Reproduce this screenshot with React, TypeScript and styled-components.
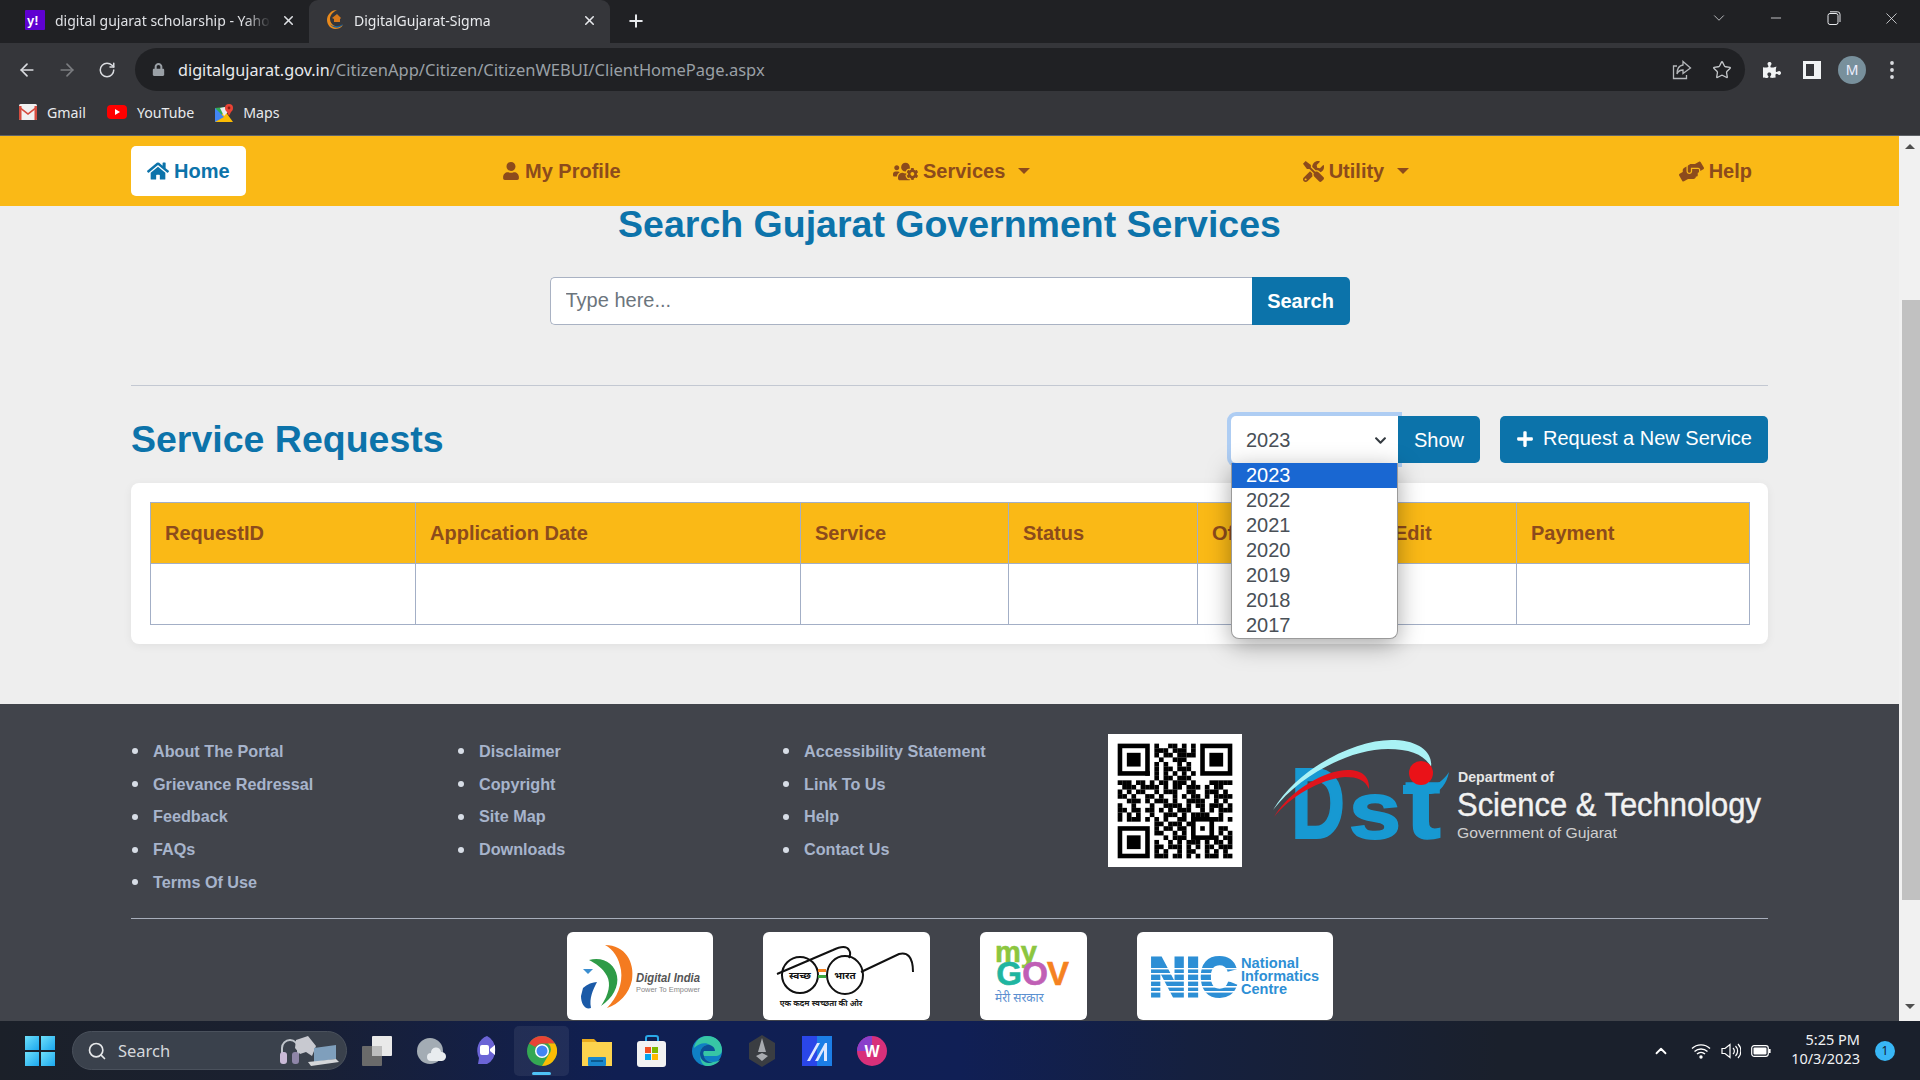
import React from "react";
import styled, { createGlobalStyle } from "styled-components";
import {
  FaHome, FaUser, FaUsersCog, FaTools, FaHandsHelping, FaPlus, FaPuzzlePiece, FaLock, FaChevronDown,
} from "react-icons/fa";
import { ArrowLeft, ArrowRight, RotateCw, Star, X, Plus, ChevronDown, Minus, Search as SearchGlyph, ChevronUp } from "lucide-react";

const BLUE = "#0c73aa";
const BROWN = "#8c4b1c";
const YELLOW = "#fab916";
const SANS = `"Liberation Sans", Arial, sans-serif`;
const UI = `"Noto Sans", "Open Sans", sans-serif`;
const HINDI = `"Noto Sans Devanagari", "Noto Sans", "DejaVu Sans", sans-serif`;

const Global = createGlobalStyle`
  html, body { margin: 0; padding: 0; height: 100%; overflow: hidden; background: #eee; }
  * { box-sizing: border-box; }
  #root { height: 100%; }
`;

const Screen = styled.div`
  display: flex; flex-direction: column; width: 1920px; height: 1080px; overflow: hidden;
  font-family: ${SANS};
`;

/* ---------- browser chrome ---------- */
const TabStrip = styled.div`
  display: flex; align-items: flex-end; height: 43px; padding-left: 8px; background: #202124; flex-shrink: 0;
`;
const Tab = styled.div<{ $active?: boolean }>`
  display: flex; align-items: center; gap: 10px; width: 301px; height: 43px; padding: 0 13px 3px 17px;
  border-radius: 9px 9px 0 0; color: ${(p) => (p.$active ? "#e8eaed" : "#dfe1e5")};
  background: ${(p) => (p.$active ? "#35363a" : "transparent")};
  font: 14px ${UI};
`;
const TabTitle = styled.span`
  flex: 1; white-space: nowrap; overflow: hidden;
  mask-image: linear-gradient(90deg, #000 88%, transparent 100%);
`;
const NewTab = styled.div`
  display: flex; margin: 0 0 8px 16px; color: #e8eaed; height: 28px; align-items: center;
`;
const WindowControls = styled.div`
  display: flex; align-items: center; margin-left: auto; align-self: flex-start; height: 36px; color: #e8eaed;
`;
const WinBtn = styled.div`
  display: flex; align-items: center; justify-content: center; width: 57.5px;
`;
const Toolbar = styled.div`
  display: flex; align-items: flex-start; height: 48px; padding: 5px 0 0 7px; background: #35363a; flex-shrink: 0;
`;
const ToolBtn = styled.div<{ $dim?: boolean }>`
  display: flex; align-items: center; justify-content: center; width: 40px; height: 43px; flex-shrink: 0;
  color: ${(p) => (p.$dim ? "#7b7d80" : "#dadce0")};
`;
const Address = styled.div`
  display: flex; align-items: center; width: 1610px; height: 43px; margin: 0 7px 0 8px; padding: 0 3px 0 17px;
  border-radius: 22px; background: #202124; font: 16.2px ${UI};
`;
const LockIcon = styled.span`
  display: flex; color: #9aa0a6; width: 26px; font-size: 13px;
`;
const Host = styled.span` color: #e8eaed; `;
const UrlPath = styled.span` color: #9aa0a6; flex: 1; font-size: 16.5px; `;
const Avatar = styled.div`
  display: flex; align-items: center; justify-content: center; width: 28px; height: 28px; border-radius: 50%;
  background: #78909c; color: #eef; font: 14px ${UI};
`;
const Bookmarks = styled.div`
  display: flex; align-items: center; height: 45px; padding: 0 0 2px 19px; background: #35363a;
  border-bottom: 1px solid #5f6368; flex-shrink: 0; color: #e8eaed; font: 14.2px ${UI};
`;
const Bookmark = styled.div`
  display: flex; align-items: center; gap: 10px; margin-right: 21px;
`;

/* ---------- page ---------- */
const Viewport = styled.div` display: flex; flex: 1; min-height: 0; `;
const Page = styled.main`
  flex: 1; min-width: 0; background: #eeeeee; overflow: hidden; display: flex; flex-direction: column;
`;
const Bar = styled.aside`
  display: flex; flex-direction: column; align-items: center; width: 21px; background: #f1f1f1; flex-shrink: 0;
`;
const ArrowUp = styled.i`
  margin-top: 8px; border: 5px solid transparent; border-top: 0; border-bottom: 5px solid #505050;
`;
const Thumb = styled.div`
  width: 18px; height: 600px; margin-top: 151px; margin-left: 3px; background: #c1c1c1;
`;
const ArrowDown = styled.i`
  margin-top: 104px; border: 5px solid transparent; border-bottom: 0; border-top: 5px solid #505050;
`;

const Nav = styled.nav`
  display: flex; justify-content: space-between; align-items: flex-start; height: 70px; padding: 10px 131px 0 131px;
  background: ${YELLOW}; flex-shrink: 0;
`;
const NavItem = styled.a<{ $active?: boolean; $wide?: boolean }>`
  display: flex; align-items: center; gap: 5px; height: 50px; padding: 0 16px 0 ${(p) => (p.$wide ? 19 : 16)}px; border-radius: 5px;
  font: bold 20px ${SANS}; color: ${(p) => (p.$active ? BLUE : BROWN)};
  background: ${(p) => (p.$active ? "#fff" : "transparent")};
`;
const Caret = styled.i`
  margin-left: 8px; border-top: 6px solid ${BROWN}; border-left: 6px solid transparent; border-right: 6px solid transparent;
`;
const Content = styled.div` padding: 0 131px; flex-shrink: 0; `;
const Title = styled.h1`
  margin: 0; text-align: center; font: bold 37.5px/37px ${SANS}; color: ${BLUE};
`;
const SearchRow = styled.div`
  display: flex; width: 800px; height: 48px; margin: 34px auto 0;
`;
const SearchInput = styled.input`
  flex: 1; min-width: 0; padding: 0 15px 2px; border: 1px solid #a9b2c3; border-right: 0; border-radius: 5px 0 0 5px;
  background: #fff; font: 20px ${SANS}; color: #495057;
  &::placeholder { color: #6c757d; opacity: 1; }
`;
const SearchBtn = styled.button`
  width: 98px; border: 0; border-radius: 0 5px 5px 0; background: ${BLUE}; color: #fff; font: bold 20px ${SANS};
`;
const Rule = styled.hr`
  margin: 60px 0 0; border: 0; border-top: 1px solid #c3c8d2; height: 1px;
`;
const SectionRow = styled.div`
  display: flex; align-items: center; height: 47px; margin-top: 30px;
`;
const SectionTitle = styled.h2`
  margin: 0; flex: 1; font: bold 37.5px/47px ${SANS}; color: ${BLUE};
`;
const SelectWrap = styled.div` position: relative; width: 167px; height: 47px; `;
const SelectBox = styled.div`
  display: flex; align-items: center; justify-content: space-between; height: 47px; padding: 1px 11px 0 15px;
  background: #fff; border-radius: 5px 0 0 5px; box-shadow: 0 0 0 4px #aecdf3; font: 20px ${SANS}; color: #495057;
`;
const Dropdown = styled.ul`
  position: absolute; z-index: 3; left: 0; top: 100%; width: 167px; margin: 0; padding: 0; list-style: none;
  background: #fff; border: 1px solid #9a9a9a; border-top: 0; border-radius: 0 0 8px 8px; overflow: hidden;
  box-shadow: 0 6px 24px rgba(0, 0, 0, 0.35);
`;
const Option = styled.li<{ $selected?: boolean }>`
  height: 25px; padding-left: 14px; font: 20px/25px ${SANS};
  color: ${(p) => (p.$selected ? "#fff" : "#495057")};
  background: ${(p) => (p.$selected ? "#1967d2" : "transparent")};
`;
const ShowBtn = styled.button`
  position: relative; width: 82px; height: 47px; padding-top: 2px; border: 0; border-radius: 0 5px 5px 0; background: ${BLUE}; color: #fff;
  font: 20px ${SANS};
`;
const RequestBtn = styled.button`
  display: flex; align-items: center; gap: 9px; width: 268px; height: 47px; margin-left: 20px; padding: 0 0 2px 16px; border: 0;
  border-radius: 5px; background: ${BLUE}; color: #fff; font: 20px ${SANS};
`;
const Card = styled.section`
  margin-top: 20px; padding: 19px 19px 19px 19px; background: #fff; border-radius: 8px; box-shadow: 0 2px 10px rgba(0, 0, 0, 0.06);
`;
const Table = styled.table`
  width: 1599px; table-layout: fixed; border-collapse: collapse; font-family: ${SANS};
`;
const Th = styled.th`
  height: 61px; padding: 0 14px; text-align: left; background: ${YELLOW}; border: 1px solid #a3afc6;
  font: bold 20px ${SANS}; color: ${BROWN};
`;
const Td = styled.td` height: 61px; border: 1px solid #a3afc6; background: #fff; `;

const Footer = styled.footer`
  flex: 1; margin-top: 60px; padding: 30px 131px 0; background: #41444b;
`;
const FooterTop = styled.div`
  display: grid; grid-template-columns: 326px 325px 326px 134px 1fr; height: 164px;
`;
const LinkList = styled.ul` margin: 0; padding: 1px 0 0; list-style: none; `;
const LinkItem = styled.li`
  display: flex; align-items: center; gap: 15px; height: 32.75px; padding-left: 1px;
  font: bold 16.2px ${SANS}; color: #a7b4cb;
`;
const Dot = styled.i` width: 6px; height: 6px; border-radius: 50%; background: #d7dde6; flex-shrink: 0; `;
const QrBox = styled.div` width: 134px; height: 133px; background: #fff; display: flex; `;
const DstSvg = styled.svg` display: block; margin: 1px 0 0 28px; `;
const FooterRule = styled.hr`
  margin: 20px 0 0; border: 0; border-top: 1px solid #a7aebb; height: 1px;
`;
const Partners = styled.div`
  display: flex; justify-content: center; gap: 50px; margin-top: 13px;
`;
const PartnerCard = styled.div<{ $w: number }>`
  width: ${(p) => p.$w}px; height: 88px; background: #fff; border-radius: 6px; overflow: hidden;
`;

/* ---------- taskbar ---------- */
const Taskbar = styled.footer`
  display: flex; align-items: center; height: 59px; flex-shrink: 0; padding-right: 25px; color: #fff;
  background: linear-gradient(90deg, #1b2029 0%, #1a2030 14%, #101f52 32%, #101f55 50%, #15203f 62%, #1a202c 78%, #1a202c 100%);
  font-family: ${UI};
`;
const StartBtn = styled.div`
  display: grid; grid-template-columns: 14px 14px; gap: 2px; margin: 0 17px 0 25px;
`;
const Pane = styled.i` width: 14px; height: 14px; background: linear-gradient(135deg, #6ee0fb, #1ba7ee); `;
const SearchPill = styled.div`
  display: flex; align-items: center; gap: 11px; width: 275px; height: 39px; padding-left: 14px; border-radius: 20px;
  background: #3a414c; border: 1px solid #4a515c; color: #d5d8dc; font-size: 16.5px;
`;
const Deco = styled.svg` margin-left: auto; margin-right: 6px; `;
const Slots = styled.div` display: flex; margin-left: 2px; `;
const Slot = styled.div<{ $on?: boolean }>`
  position: relative; display: flex; align-items: center; justify-content: center; width: 55px; height: 50px; border-radius: 5px;
  background: ${(p) => (p.$on ? "rgba(255,255,255,.07)" : "transparent")};
`;
const Running = styled.i`
  position: absolute; left: 18px; bottom: 1px; width: 19px; height: 3px; border-radius: 2px; background: #4fc3f7;
`;
const Tray = styled.div`
  display: flex; align-items: center; gap: 10px; margin-left: auto;
`;
const TrayChevron = styled.span` display: flex; margin-right: 11px; `;
const Clock = styled.div`
  margin-left: 10px; padding-bottom: 3px; text-align: right; font-size: 14.5px; line-height: 19px; color: #f0f2f4;
`;
const Badge = styled.div`
  display: flex; align-items: center; justify-content: center; width: 20px; height: 20px; margin-left: 5px; border-radius: 50%;
  background: #38b6f5; color: #10202c; font-size: 12px;
`;

/* ---------- drawings ---------- */
const Yahoo = () => (
  <svg width="20" height="20" viewBox="0 0 20 20">
    <rect width="20" height="20" rx="1" fill="#5f01d1" />
    <text x="2" y="15" fontFamily={SANS} fontWeight="bold" fontSize="13" fill="#fff">y!</text>
  </svg>
);
const Sigma = () => (
  <svg width="18" height="20" viewBox="0 0 18 20">
    <path d="M11 0C5 0 1 5 1 10c0 5 4 9 8 9 3 0 6-1 8-4-3 2-6 2-8 1-3-1-5-4-5-7 0-4 3-7 7-9z" fill="#e98a1c" />
    <path d="M6 8l5-4 4 4-1 1v3H8V9z" fill="#d9791a" />
    <path d="M4 14c3 3 8 3 13 0-3 5-10 5-13 0z" fill="#17609c" />
  </svg>
);
const Gmail = () => (
  <svg width="18" height="16" viewBox="0 0 18 16">
    <rect width="18" height="16" rx="1.5" fill="#f1f1f1" />
    <path d="M0 2l9 7 9-7v2L9 11 0 4z" fill="#d54c3f" />
    <path d="M0 2h2.5v14H1a1 1 0 0 1-1-1zM18 2h-2.5v14H17a1 1 0 0 0 1-1z" fill="#d54c3f" />
  </svg>
);
const Youtube = () => (
  <svg width="20" height="14" viewBox="0 0 20 14">
    <rect width="20" height="14" rx="4" fill="#f00" />
    <path d="M8 4l5 3-5 3z" fill="#fff" />
  </svg>
);
const Maps = () => (
  <svg width="18" height="19" viewBox="0 0 18 19">
    <path d="M0 5l10-1v15H0z" fill="#34a853" />
    <path d="M0 19L10 8l8 11z" fill="#fbbc04" />
    <path d="M0 5l9 9-9 5z" fill="#4285f4" />
    <path d="M5 5l5-1 3 5-4 4z" fill="#e8eaed" />
    <circle cx="14" cy="5" r="4" fill="#ea4335" />
    <path d="M11 7l3 6 3-6z" fill="#ea4335" />
    <circle cx="14" cy="5" r="1.4" fill="#8c1c13" />
  </svg>
);
const Share = () => (
  <svg width="20" height="20" viewBox="0 0 20 20" fill="none" stroke="#b5b8bb" strokeWidth="1.3">
    <path d="M5 6H1.5v12.5h13V15" />
    <path d="M11 1.5L18.5 8 11 13.5V10c-3 0-5 1-6 4 0-5 2-8.5 6-9z" />
  </svg>
);
const SidePanel = () => (
  <svg width="18" height="18" viewBox="0 0 18 18">
    <rect width="18" height="18" fill="#f1f3f4" />
    <rect x="3" y="3" width="8" height="12" fill="#35363a" />
  </svg>
);
const Dots = () => (
  <svg width="4" height="18" viewBox="0 0 4 18" fill="#dadce0">
    <circle cx="2" cy="2" r="1.9" /><circle cx="2" cy="9" r="1.9" /><circle cx="2" cy="16" r="1.9" />
  </svg>
);
const Restore = () => (
  <svg width="14" height="14" viewBox="0 0 14 14" fill="none" stroke="#e8eaed" strokeWidth="1">
    <rect x="1" y="2.5" width="10" height="11" rx="2" />
    <path d="M3 .8h7.5A2.5 2.5 0 0 1 13 3.3V11" />
  </svg>
);

const QR_ROWS = [
  "........#..##.#.#........", "........###.###.#........", "........#.##.####........", ".........#..###..........",
  "........#.#..#.#.........", "........#.##.###.........", "......#.#.#.#.#.#........", "........#.##.###.........",
  "###.##.#.##.###.#...#####", ".###.####.#.##.###.#.##..", "#.#.##..#.###..##..###.#.", "##.#..##.#..#.#.##.#.####",
  "..###.#.###.#..####..#.#.", "#..#...#..####.#.##.###.#", "##.##.##.#.#.###..#.#.###", "#.#.#..#..###.#.####..#..",
  "#.###.#.#.#..##.#.#####.#", "........##.###.#..#.#....", "........#.##.##.#.###.##.", "........##..#.#.#####.#.#",
  "..........#.###..#...#.##", "........#..#.#.###.#.##.#", "........##.###.#.#.##.###", "........#.#..#.##..#.#.#.", "........###.##.#.#.###.##",
];
const Finder = ({ x, y }: { x: number; y: number }) => (
  <g>
    <rect x={x} y={y} width="7" height="7" fill="#000" />
    <rect x={x + 1} y={y + 1} width="5" height="5" fill="#fff" />
    <rect x={x + 2} y={y + 2} width="3" height="3" fill="#000" />
  </g>
);
const QrCode = () => (
  <svg width="134" height="133" viewBox="-2.1 -2.1 29.2 29">
    {QR_ROWS.map((row, y) =>
      row.split("").map((c, x) => (c === "#" ? <rect key={`${x}-${y}`} x={x} y={y} width="1.02" height="1.02" fill="#000" /> : null)),
    )}
    <Finder x={0} y={0} />
    <Finder x={18} y={0} />
    <Finder x={0} y={18} />
    <rect x="16" y="16" width="5" height="5" fill="#000" />
    <rect x="17" y="17" width="3" height="3" fill="#fff" />
    <rect x="18" y="18" width="1" height="1" fill="#000" />
  </svg>
);

const DstLogo = () => (
  <DstSvg width="497" height="112" viewBox="0 0 497 112">
    <text x="21" y="103" fontFamily={SANS} fontWeight="bold" fontSize="100" fill="#1799d2" stroke="#1799d2" strokeWidth="2" textLength="54" lengthAdjust="spacingAndGlyphs">D</text>
    <text x="79" y="103" fontFamily={SANS} fontWeight="bold" fontSize="80" fill="#1799d2" stroke="#1799d2" strokeWidth="2" textLength="52" lengthAdjust="spacingAndGlyphs">s</text>
    <text x="135" y="103" fontFamily={SANS} fontWeight="bold" fontSize="104" fill="#1799d2" stroke="#1799d2" strokeWidth="1.500" textLength="36" lengthAdjust="spacingAndGlyphs">t</text>
    <path d="M133 50h26c8 0 14-4 20-13-2 11-9 21-18 22h-28z" fill="#1799d2" />
    <path d="M3 75C30 30 90 3 125 5c25 1 38 13 36 27-6-12-21-18-43-18C80 14 30 40 3 75z" fill="#a9f2f5" />
    <path d="M4 82C20 55 55 35 78 35c14 0 22 7 21 19-4-9-11-12-24-12C50 44 20 62 4 82z" fill="#e0141c" />
    <circle cx="151" cy="38" r="12" fill="#ea1218" />
    <text x="188" y="47" fontFamily={SANS} fontWeight="bold" fontSize="14" fill="#e6e6e6" textLength="96" lengthAdjust="spacingAndGlyphs">Department of</text>
    <text x="187" y="81" fontFamily={SANS} fontSize="34" fill="#f2f2f2" stroke="#f2f2f2" strokeWidth=".4" textLength="304" lengthAdjust="spacingAndGlyphs">Science &amp; Technology</text>
    <text x="187" y="103" fontFamily={SANS} fontSize="15" fill="#cfcfcf" textLength="160" lengthAdjust="spacingAndGlyphs">Government of Gujarat</text>
  </DstSvg>
);

const DigitalIndia = () => (
  <svg width="146" height="88" viewBox="0 0 146 88">
    <path d="M38 13C58 13 68 30 65 48 62 62 52 72 40 76c10-10 16-24 14-38-2-12-8-21-16-25z" fill="#f47b20" />
    <path d="M22 28c14-4 26 4 28 16 2 10-4 22-16 30 8-12 10-22 6-30-4-8-12-13-18-16z" fill="#2e9b47" />
    <path d="M16 56c4-4 10-6 14-6-4 8-8 16-6 26-6 2-10-4-10-12z" fill="#1b5aa7" />
    <path d="M16 37h10l-5 5z" fill="#3b8ed0" />
    <text x="69" y="50" fontFamily={SANS} fontWeight="bold" fontStyle="italic" fontSize="12" fill="#555" textLength="64" lengthAdjust="spacingAndGlyphs">Digital India</text>
    <text x="69" y="60" fontFamily={SANS} fontSize="8" fill="#888" textLength="64" lengthAdjust="spacingAndGlyphs">Power To Empower</text>
  </svg>
);
const Swachh = () => (
  <svg width="167" height="88" viewBox="0 0 167 88">
    <g fill="none" stroke="#111" strokeWidth="2">
      <ellipse cx="37" cy="43" rx="18" ry="18" />
      <ellipse cx="82" cy="43" rx="18" ry="19" />
      <path d="M14 42L70 18c8-4 14-4 16 0 2 3 1 6 0 8" />
      <path d="M98 40l38-18c8-2 14 2 14 18" />
    </g>
    <rect x="55" y="37" width="8" height="3" fill="#f58220" />
    <rect x="55" y="43" width="8" height="3" fill="#3aa53f" />
    <text x="37" y="47" textAnchor="middle" fontFamily={HINDI} fontWeight="bold" fontSize="10" fill="#111">स्वच्छ</text>
    <text x="82" y="47" textAnchor="middle" fontFamily={HINDI} fontWeight="bold" fontSize="10" fill="#111">भारत</text>
    <text x="58" y="74" textAnchor="middle" fontFamily={HINDI} fontSize="8" fontWeight="bold" fill="#222">एक कदम स्वच्छता की ओर</text>
  </svg>
);
const MyGov = () => (
  <svg width="107" height="88" viewBox="0 0 107 88">
    <text x="15" y="30" fontFamily={SANS} fontWeight="bold" fontSize="30" fill="#8cc63f" stroke="#8cc63f" strokeWidth=".6" textLength="42" lengthAdjust="spacingAndGlyphs">my</text>
    <text x="29" y="53" fontFamily={SANS} fontWeight="bold" fontSize="33" fill="#1fb5a0" stroke="#1fb5a0" strokeWidth=".6" textAnchor="middle">G</text>
    <text x="55" y="53" fontFamily={SANS} fontWeight="bold" fontSize="33" fill="#c05fb5" stroke="#c05fb5" strokeWidth=".6" textAnchor="middle">O</text>
    <text x="78" y="53" fontFamily={SANS} fontWeight="bold" fontSize="33" fill="#f58220" stroke="#f58220" strokeWidth=".6" textAnchor="middle">V</text>
    <text x="15" y="70" fontFamily={HINDI} fontSize="12" fill="#5b8fd0">मेरी सरकार</text>
  </svg>
);
const Nic = () => (
  <svg width="196" height="88" viewBox="0 0 196 88">
    <text x="12" y="64" fontFamily={SANS} fontWeight="bold" fontSize="56" fill="#2d8fd5" stroke="#2d8fd5" strokeWidth="3" textLength="88" lengthAdjust="spacingAndGlyphs">NIC</text>
    <g fill="#fff">
      <rect x="8" y="36" width="94" height="1.4" /><rect x="8" y="41" width="94" height="1.6" /><rect x="8" y="48" width="94" height="1.6" />
      <rect x="8" y="54" width="94" height="1.6" /><rect x="8" y="59" width="94" height="1.6" />
    </g>
    <g fontFamily={SANS} fontWeight="bold" fontSize="15" fill="#2d8fd5">
      <text x="104" y="36" textLength="58" lengthAdjust="spacingAndGlyphs">National</text>
      <text x="104" y="49" textLength="78" lengthAdjust="spacingAndGlyphs">Informatics</text>
      <text x="104" y="62" textLength="46" lengthAdjust="spacingAndGlyphs">Centre</text>
    </g>
  </svg>
);

const Deco3 = () => (
  <Deco width="62" height="34" viewBox="0 0 62 34">
    <path d="M4 22V14a8 8 0 0 1 16 0v8" fill="none" stroke="#bfc4cb" strokeWidth="2" />
    <rect x="2" y="18" width="7" height="12" rx="3" fill="#c9b9d6" />
    <rect x="14" y="18" width="7" height="12" rx="3" fill="#8f86a8" />
    <path d="M18 6l12-4 8 10-4 10-6-4-6 2-5-6z" fill="#c8c9d0" />
    <path d="M36 14l22-3v14l-22 3z" fill="#7f9fbc" />
    <path d="M30 28l28-3 3 3-28 4z" fill="#d5d7da" />
  </Deco>
);
const TaskView = () => (
  <svg width="30" height="30" viewBox="0 0 30 30">
    <rect x="10" y="0" width="20" height="20" rx="1" fill="#e9e9e9" />
    <rect x="0" y="10" width="20" height="20" rx="1" fill="#6a6a6a" />
    <rect x="10" y="10" width="10" height="10" fill="#bdbdbd" />
  </svg>
);
const Weather = () => (
  <svg width="30" height="30" viewBox="0 0 30 30">
    <circle cx="13" cy="15" r="13" fill="#a3acb4" />
    <path d="M14 25a4 4 0 0 1 0-8 5 5 0 0 1 10-1 4.500 4.500 0 0 1 1 9z" fill="#e8ecef" />
  </svg>
);
const Meet = () => (
  <svg width="28" height="32" viewBox="0 0 28 32">
    <path d="M14 1a13 15 0 0 1 0 28H5l1-6A13 15 0 0 1 14 1z" fill="#6b64d6" />
    <rect x="7" y="10" width="9" height="10" rx="2" fill="#fff" />
    <path d="M17 14l5-4v10l-5-4z" fill="#fff" />
  </svg>
);
const Chrome = () => (
  <svg width="30" height="30" viewBox="0 0 30 30">
    <circle cx="15" cy="15" r="15" fill="#34a853" />
    <path d="M15 0a15 15 0 0 1 13 7.500H15A7.500 7.500 0 0 0 8.500 11L2 7.500A15 15 0 0 1 15 0z" fill="#ea4335" />
    <path d="M28 7.500A15 15 0 0 1 15 30l6.500-11A7.500 7.500 0 0 0 21 7.500z" fill="#fbbc04" />
    <circle cx="15" cy="15" r="7" fill="#fff" />
    <circle cx="15" cy="15" r="5.500" fill="#4285f4" />
  </svg>
);
const Folder = () => (
  <svg width="30" height="30" viewBox="0 0 30 30">
    <path d="M0 3h12l3 3h0v6H0z" fill="#e8a91c" />
    <rect y="6" width="30" height="24" fill="#fcd34e" />
    <rect x="6" y="21" width="18" height="9" rx="1" fill="#1a88cf" />
    <rect x="9" y="24" width="12" height="2" fill="#0b5c92" />
  </svg>
);
const Store = () => (
  <svg width="30" height="32" viewBox="0 0 30 32">
    <path d="M9 6V3a2 2 0 0 1 2-2h8a2 2 0 0 1 2 2v3" fill="none" stroke="#29a8e8" strokeWidth="2" />
    <rect y="6" width="29" height="26" rx="3" fill="#f2f2f2" />
    <rect x="8" y="12" width="6" height="6" fill="#f25022" /><rect x="15" y="12" width="6" height="6" fill="#7fba00" />
    <rect x="8" y="19" width="6" height="6" fill="#00a4ef" /><rect x="15" y="19" width="6" height="6" fill="#ffb900" />
  </svg>
);
const Edge = () => (
  <svg width="30" height="30" viewBox="0 0 30 30">
    <circle cx="15" cy="15" r="15" fill="#0f7fc4" />
    <path d="M15 0c9 0 15 6 15 14 0 4-3 6-7 6H12c0 3 4 6 9 6 2 0 5-1 7-2-3 4-8 6-13 6C10 30 8 24 8 18c0-6 5-10 10-9-4-3-11-2-16 3C3 5 8 0 15 0z" fill="#37c6a5" />
    <path d="M8 18c0-6 5-10 10-9 3 1 5 3 5 6H12c-1 1-1 3 0 5 1 4 4 6 9 6-7 3-13-2-13-8z" fill="#0b4f97" />
  </svg>
);
const Hex = () => (
  <svg width="28" height="32" viewBox="0 0 28 32">
    <path d="M14 0l13 8v16l-13 8-13-8V8z" fill="#3a3d42" />
    <path d="M14 3l4 14h-8zM8 21l6-3 6 3-6 5z" fill="#a8abb0" />
  </svg>
);
const MaxIcon = () => (
  <svg width="30" height="30" viewBox="0 0 30 30">
    <rect width="30" height="30" fill="#2a46e8" />
    <rect x="15" width="15" height="30" fill="#1c7ee6" />
    <path d="M5 25L15 7h3L8 25zM13 25L23 7h2v18h-3V14l-6 11z" fill="#dfe8ff" />
  </svg>
);
const Wps = () => (
  <svg width="30" height="30" viewBox="0 0 30 30">
    <circle cx="15" cy="15" r="15" fill="#d8307a" />
    <path d="M0 15A15 15 0 0 1 15 0v15z" fill="#8a3fcb" />
    <text x="15" y="21" textAnchor="middle" fontFamily={SANS} fontWeight="bold" fontSize="16" fill="#fff">W</text>
  </svg>
);
const Wifi = () => (
  <svg width="20" height="16" viewBox="0 0 20 16" fill="none" stroke="#fff" strokeWidth="1.4">
    <path d="M1 5.500a13 13 0 0 1 18 0M3.500 8.500a9.500 9.500 0 0 1 13 0M6 11a6 6 0 0 1 8 0" />
    <circle cx="10" cy="14" r="1" fill="#fff" />
  </svg>
);
const Volume = () => (
  <svg width="20" height="16" viewBox="0 0 20 16" fill="none" stroke="#fff" strokeWidth="1.2">
    <path d="M1 5.500h3L9 1.500v13l-5-4H1z" />
    <path d="M12 5a4 4 0 0 1 0 6M14.500 3a7 7 0 0 1 0 10M17 1a10 10 0 0 1 0 14" />
  </svg>
);
const Battery = () => (
  <svg width="20" height="12" viewBox="0 0 20 12">
    <rect x=".7" y=".7" width="16.600" height="10.600" rx="2.500" fill="none" stroke="#fff" strokeWidth="1.2" />
    <rect x="2.500" y="2.500" width="13" height="7" rx="1" fill="#fff" />
    <rect x="18" y="4" width="1.600" height="4" fill="#fff" />
  </svg>
);

const YEARS = [2023, 2022, 2021, 2020, 2019, 2018, 2017];
const COLUMNS: [string, number][] = [
  ["RequestID", 265], ["Application Date", 385], ["Service", 208], ["Status", 189], ["Office", 182], ["Edit", 137], ["Payment", 233],
];
const LINKS = [
  ["About The Portal", "Grievance Redressal", "Feedback", "FAQs", "Terms Of Use"],
  ["Disclaimer", "Copyright", "Site Map", "Downloads"],
  ["Accessibility Statement", "Link To Us", "Help", "Contact Us"],
];

export default function App() {
  return (
    <Screen>
      <Global />
      <TabStrip>
        <Tab><Yahoo /><TabTitle>digital gujarat scholarship - Yahoo Search Results</TabTitle><X size={15} strokeWidth={2.5} /></Tab>
        <Tab $active><Sigma /><TabTitle>DigitalGujarat-Sigma</TabTitle><X size={15} strokeWidth={2.5} /></Tab>
        <NewTab><Plus size={20} strokeWidth={2.4} /></NewTab>
        <WindowControls>
          <WinBtn><ChevronDown size={18} strokeWidth={1} /></WinBtn>
          <WinBtn><Minus size={16} strokeWidth={1.2} /></WinBtn>
          <WinBtn><Restore /></WinBtn>
          <WinBtn><X size={19} strokeWidth={1} /></WinBtn>
        </WindowControls>
      </TabStrip>
      <Toolbar>
        <ToolBtn><ArrowLeft size={20} strokeWidth={2} /></ToolBtn>
        <ToolBtn $dim><ArrowRight size={20} strokeWidth={2} /></ToolBtn>
        <ToolBtn><RotateCw size={18} strokeWidth={2} /></ToolBtn>
        <Address>
          <LockIcon><FaLock /></LockIcon>
          <Host>digitalgujarat.gov.in</Host>
          <UrlPath>/CitizenApp/Citizen/CitizenWEBUI/ClientHomePage.aspx</UrlPath>
          <ToolBtn><Share /></ToolBtn>
          <ToolBtn><Star size={20} strokeWidth={1.6} color="#c4c7ca" /></ToolBtn>
        </Address>
        <ToolBtn><FaPuzzlePiece size={18} color="#f1f3f4" /></ToolBtn>
        <ToolBtn><SidePanel /></ToolBtn>
        <ToolBtn><Avatar>M</Avatar></ToolBtn>
        <ToolBtn><Dots /></ToolBtn>
      </Toolbar>
      <Bookmarks>
        <Bookmark><Gmail />Gmail</Bookmark>
        <Bookmark><Youtube />YouTube</Bookmark>
        <Bookmark><Maps />Maps</Bookmark>
      </Bookmarks>
      <Viewport>
        <Page>
          <Nav>
            <NavItem $active><FaHome size={22} />Home</NavItem>
            <NavItem $wide><FaUser size={18} />My Profile</NavItem>
            <NavItem $wide><FaUsersCog size={25} />Services<Caret /></NavItem>
            <NavItem $wide><FaTools size={21} />Utility<Caret /></NavItem>
            <NavItem><FaHandsHelping size={25} />Help</NavItem>
          </Nav>
          <Content>
            <Title>Search Gujarat Government Services</Title>
            <SearchRow>
              <SearchInput placeholder="Type here..." readOnly />
              <SearchBtn>Search</SearchBtn>
            </SearchRow>
            <Rule />
            <SectionRow>
              <SectionTitle>Service Requests</SectionTitle>
              <SelectWrap>
                <SelectBox>2023<FaChevronDown size={13} color="#343a40" /></SelectBox>
                <Dropdown>
                  {YEARS.map((y, i) => <Option key={y} $selected={i === 0}>{y}</Option>)}
                </Dropdown>
              </SelectWrap>
              <ShowBtn>Show</ShowBtn>
              <RequestBtn><FaPlus size={18} />Request a New Service</RequestBtn>
            </SectionRow>
            <Card>
              <Table>
                <colgroup>{COLUMNS.map(([name, w]) => <col key={name} width={w} />)}</colgroup>
                <thead><tr>{COLUMNS.map(([name]) => <Th key={name}>{name}</Th>)}</tr></thead>
                <tbody><tr>{COLUMNS.map(([name]) => <Td key={name} />)}</tr></tbody>
              </Table>
            </Card>
          </Content>
          <Footer>
            <FooterTop>
              {LINKS.map((col) => (
                <LinkList key={col[0]}>
                  {col.map((l) => <LinkItem key={l}><Dot />{l}</LinkItem>)}
                </LinkList>
              ))}
              <QrBox><QrCode /></QrBox>
              <DstLogo />
            </FooterTop>
            <FooterRule />
            <Partners>
              <PartnerCard $w={146}><DigitalIndia /></PartnerCard>
              <PartnerCard $w={167}><Swachh /></PartnerCard>
              <PartnerCard $w={107}><MyGov /></PartnerCard>
              <PartnerCard $w={196}><Nic /></PartnerCard>
            </Partners>
          </Footer>
        </Page>
        <Bar>
          <ArrowUp />
          <Thumb />
          <ArrowDown />
        </Bar>
      </Viewport>
      <Taskbar>
        <StartBtn><Pane /><Pane /><Pane /><Pane /></StartBtn>
        <SearchPill><SearchGlyph size={20} strokeWidth={2} color="#e6e8ea" />Search<Deco3 /></SearchPill>
        <Slots>
          <Slot><TaskView /></Slot>
          <Slot><Weather /></Slot>
          <Slot><Meet /></Slot>
          <Slot $on><Chrome /><Running /></Slot>
          <Slot><Folder /></Slot>
          <Slot><Store /></Slot>
          <Slot><Edge /></Slot>
          <Slot><Hex /></Slot>
          <Slot><MaxIcon /></Slot>
          <Slot><Wps /></Slot>
        </Slots>
        <Tray>
          <TrayChevron><ChevronUp size={18} strokeWidth={2.4} /></TrayChevron>
          <Wifi />
          <Volume />
          <Battery />
          <Clock>5:25 PM<br />10/3/2023</Clock>
          <Badge>1</Badge>
        </Tray>
      </Taskbar>
    </Screen>
  );
}
